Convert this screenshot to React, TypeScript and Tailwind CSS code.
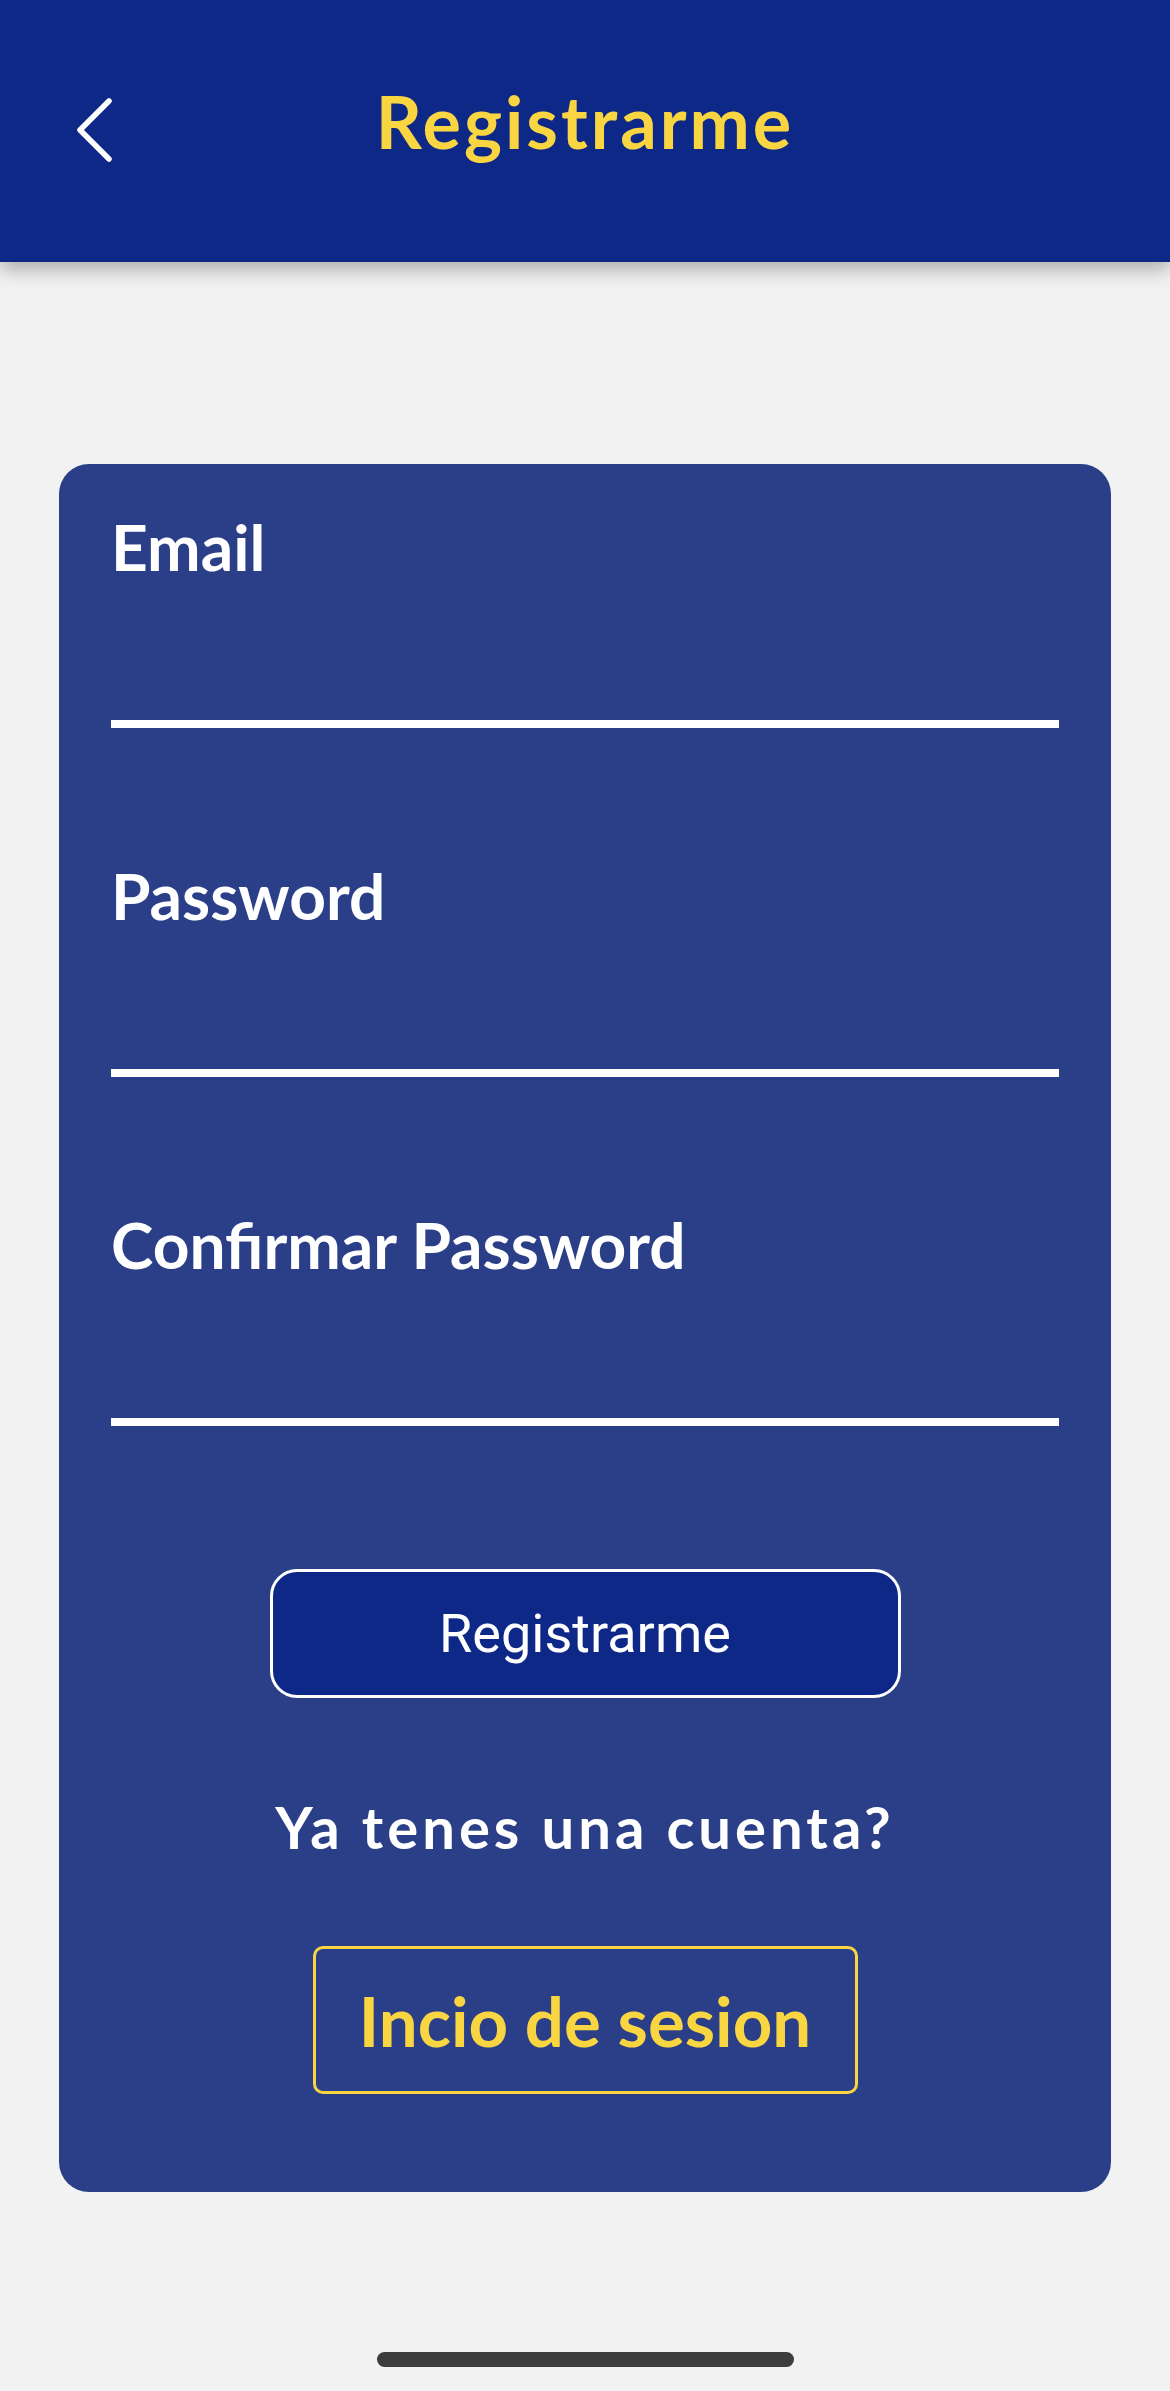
const BackChevron = () => (
  <svg width="40" height="66" viewBox="0 0 40 66" fill="none">
    <polyline
      points="34,4 5,33 34,62"
      stroke="#ffffff"
      strokeWidth="5.5"
      strokeLinecap="round"
      strokeLinejoin="round"
    />
  </svg>
);

const fields = ["Email", "Password", "Confirmar Password"];

export default function App() {
  return (
    <div className="min-h-[2391px] bg-[#f2f2f2] flex flex-col font-['Lato',sans-serif]">
      {/* header */}
      <header className="h-[262px] bg-[#0e2887] shadow-[0_8px_18px_rgba(0,0,0,0.28)] relative z-10">
        <div className="grid grid-cols-[1fr_auto_1fr] items-start pt-[85px]">
          <div className="pl-[75px] pt-[12px]">
            <BackChevron />
          </div>
          <h1 className="text-[72px] leading-none font-bold tracking-[3px] text-[#f9d542]">
            Registrarme
          </h1>
          <div />
        </div>
      </header>

      {/* formulario */}
      <main className="mt-[202px] mx-[59px] bg-[#2a3f88] rounded-[30px] pt-[51px] pb-[98px] px-[52px]">
        <div className="flex flex-col gap-[136px]">
          {fields.map((f) => (
            <div key={f}>
              <label className="block text-[64px] leading-none font-bold text-white">
                {f}
              </label>
              <div className="h-[149px] border-b-[8px] border-white" />
            </div>
          ))}
        </div>

        <div className="flex flex-col items-center">
          <button className="mt-[143px] w-[631px] h-[129px] bg-[#0e2887] border-[3px] border-white rounded-[27px] text-white text-[54px] font-['Roboto',sans-serif]">
            Registrarme
          </button>
          <p className="mt-[100px] text-[58px] leading-none font-bold tracking-[4px] text-white">
            Ya tenes una cuenta?
          </p>
          <button className="mt-[90px] w-[545px] h-[148px] border-[3px] border-[#f9d542] rounded-[10px] text-[69px] leading-none font-bold text-[#f9d542]">
            Incio de sesion
          </button>
        </div>
      </main>

      {/* home indicator */}
      <div className="mt-auto pb-[24px] flex justify-center">
        <div className="w-[417px] h-[15px] rounded-full bg-[#3d3d3d]" />
      </div>
    </div>
  );
}
